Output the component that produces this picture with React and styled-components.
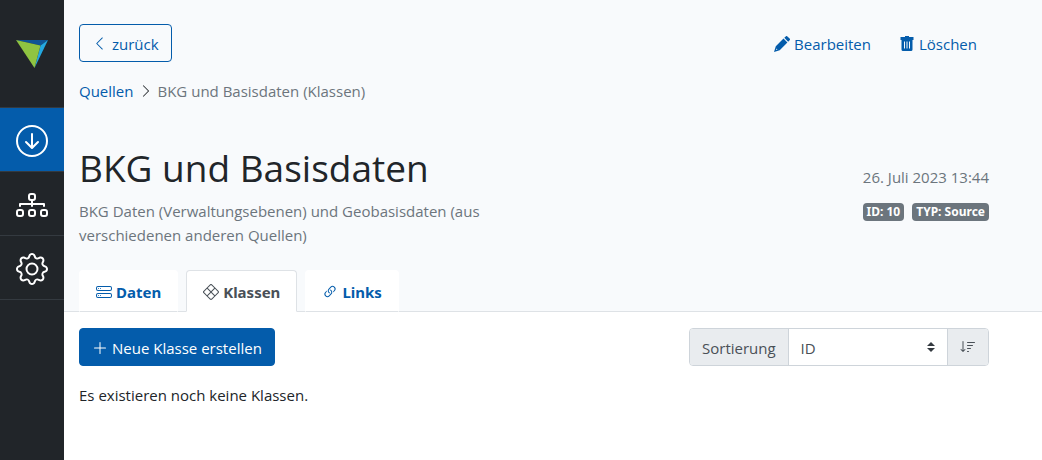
import React, { useState } from 'react';
import styled, { createGlobalStyle, css } from 'styled-components';
import {
  BsArrowDownCircle,
  BsDiagram3,
  BsGear,
  BsChevronLeft,
  BsChevronRight,
  BsHddStack,
  BsXDiamond,
  BsLink45Deg,
  BsPlusLg,
  BsSortDown,
} from 'react-icons/bs';

const blue = '#045cab';
const dark = '#212529';
const muted = '#6c757d';
const line = '#dee2e6';
const inputLine = '#ced4da';

const GlobalStyle = createGlobalStyle`
  *, *::before, *::after {
    box-sizing: border-box;
  }

  body {
    margin: 0;
    background: #fff;
    color: ${dark};
    font-family: 'Open Sans', 'Noto Sans', sans-serif;
    font-size: 15px;
    line-height: 24px;
  }

  button, select {
    font: inherit;
  }

  a {
    color: ${blue};
    text-decoration: none;
  }
`;

const Layout = styled.div`
  display: flex;
  min-height: 100vh;
`;

const Sidebar = styled.nav`
  flex: none;
  width: 64px;
  background: ${dark};
`;

const Logo = styled.a`
  display: flex;
  align-items: center;
  justify-content: center;
  height: 107px;
`;

const SideLink = styled.a`
  display: flex;
  align-items: center;
  justify-content: center;
  height: 64px;
  padding-top: 2px;
  border-top: 1px solid #343a40;
  color: #fff;
  font-size: 32px;
  background: ${(props) => (props.$active ? blue : 'transparent')};

  &:last-child {
    height: 65px;
    border-bottom: 1px solid #343a40;
  }
`;

const Main = styled.main`
  flex: 1;
  min-width: 0;
`;

const Header = styled.header`
  padding-top: 24px;
  background: #f8fafc;
  border-bottom: 1px solid ${line};
`;

const Container = styled.div`
  max-width: 940px;
  padding: 0 15px;
`;

const Row = styled.div`
  display: flex;
  justify-content: space-between;
  align-items: flex-start;
`;

const Button = styled.button`
  display: inline-flex;
  align-items: center;
  gap: 4px;
  height: 38px;
  padding: 1px 12px 0;
  border: 1px solid transparent;
  border-radius: 4px;
  background: transparent;
  color: ${blue};
  cursor: pointer;

  ${(props) => props.$variant === 'outline' && css`
    gap: 5px;
    border-color: ${blue};
  `}

  ${(props) => props.$variant === 'primary' && css`
    border-color: ${blue};
    background: ${blue};
    color: #fff;
  `}
`;

const Actions = styled.div`
  display: flex;
  gap: 3px;

  ${Button} {
    padding-right: 11px;
  }
`;

const Breadcrumb = styled.nav`
  display: flex;
  align-items: center;
  gap: 5px;
  margin-top: 17px;
  color: ${muted};

  svg {
    color: ${dark};
    font-size: 14px;
  }
`;

const TitleRow = styled(Row)`
  margin-top: 41px;
`;

const Title = styled.h1`
  margin: 0 0 7px;
  font-size: 37px;
  font-weight: 400;
  line-height: 48px;
`;

const Lead = styled.p`
  max-width: 425px;
  margin: 0;
  color: ${muted};
`;

const Meta = styled.div`
  display: flex;
  flex-direction: column;
  align-items: flex-end;
  gap: 14px;
  padding-top: 21px;
  color: ${muted};
`;

const Badges = styled.div`
  display: flex;
  gap: 8px;
`;

const Badge = styled.span`
  padding: 0 4px;
  border-radius: 4px;
  background: ${muted};
  color: #fff;
  font-family: 'Noto Sans', sans-serif;
  font-size: 12px;
  font-weight: 700;
  line-height: 18px;
`;

const Tabs = styled.div`
  display: flex;
  gap: 8px;
  margin: 23px 0 -1px;
`;

const Tab = styled.a`
  display: flex;
  align-items: center;
  gap: 4px;
  height: 42px;
  padding: 2px 16px 0;
  border: 1px solid #fff;
  border-bottom-color: ${line};
  border-radius: 4px 4px 0 0;
  background: #fff;
  font-family: 'Noto Sans', sans-serif;
  font-weight: 700;

  ${(props) => props.$active && css`
    border-color: ${line};
    border-bottom-color: #fff;
    color: #495057;
  `}

  svg {
    font-size: 16px;
  }
`;

const Content = styled(Container)`
  padding-top: 16px;
`;

const Empty = styled.p`
  margin: 17px 0 0;
`;

const SortGroup = styled.div`
  display: flex;
  width: 300px;
  height: 38px;
  border: 1px solid ${inputLine};
  border-radius: 4px;
  overflow: hidden;
`;

const SortLabel = styled.label`
  display: flex;
  align-items: center;
  padding: 2px 12px 0;
  background: #e9ecef;
  color: #495057;
`;

const SelectBox = styled.div`
  display: flex;
  flex: 1;
  align-items: center;
  padding-right: 12px;
  border: solid ${inputLine};
  border-width: 0 1px;
`;

const Select = styled.select`
  flex: 1;
  height: 36px;
  margin-right: -8px;
  padding: 2px 12px 0;
  border: 0;
  background: transparent;
  color: #495057;
  appearance: none;
`;

const SortButton = styled.button`
  display: flex;
  align-items: center;
  padding: 0 12px;
  border: 0;
  background: #e9ecef;
  color: #495057;
  font-size: 16px;
`;

const LogoMark = () => (
  <svg width="32" height="30" viewBox="0 0 32 30" aria-hidden="true">
    <path d="M0 1H32L24.500 6.500Z" fill="#0f5595" />
    <path d="M32 1L18.500 29L24.500 6.500Z" fill="#23a9e1" />
    <path d="M0 1L24.500 6.500L18.500 29Z" fill="#8fc441" />
  </svg>
);

const PencilIcon = () => (
  <svg width="16" height="16" viewBox="0 0 16 16" fill="currentColor" aria-hidden="true">
    <path d="M11.700.4a1.200 1.200 0 0 1 1.700 0l2.200 2.200a1.200 1.200 0 0 1 0 1.700l-1.400 1.400L10.300 1.800z" />
    <path d="M9.500 2.600l3.900 3.900-7.700 7.700L0 16l1.800-5.700zM2.500 12.600l-.5 1.500 1.500-.5z" fillRule="evenodd" />
  </svg>
);

const TrashIcon = () => (
  <svg width="16" height="16" viewBox="0 0 16 16" fill="currentColor" aria-hidden="true">
    <path d="M6 0h4v1h4.500v3h-13V1H6z" />
    <path d="M2.500 4h11v9.500a1.500 1.500 0 0 1-1.500 1.500H4a1.500 1.500 0 0 1-1.500-1.500zM5 5.500v7h1v-7zm2.500 0v7h1v-7zm2.500 0v7h1v-7z" fillRule="evenodd" />
  </svg>
);

const Arrows = () => (
  <svg width="8" height="10" viewBox="0 0 4 5" aria-hidden="true">
    <path fill="#343a40" d="M2 0L0 2h4zm0 5L0 3h4z" />
  </svg>
);

const tabs = [
  { id: 'daten', label: 'Daten', icon: BsHddStack },
  { id: 'klassen', label: 'Klassen', icon: BsXDiamond },
  { id: 'links', label: 'Links', icon: BsLink45Deg },
];

const App = () => {
  const [tab, setTab] = useState('klassen');

  return (
    <>
      <GlobalStyle />
      <Layout>
        <Sidebar>
          <Logo href="#" aria-label="Start"><LogoMark /></Logo>
          <SideLink href="#quellen" $active aria-label="Quellen"><BsArrowDownCircle /></SideLink>
          <SideLink href="#struktur" aria-label="Struktur"><BsDiagram3 /></SideLink>
          <SideLink href="#einstellungen" aria-label="Einstellungen"><BsGear /></SideLink>
        </Sidebar>
        <Main>
          <Header>
            <Container>
              <Row>
                <Button $variant="outline"><BsChevronLeft />zurück</Button>
                <Actions>
                  <Button><PencilIcon />Bearbeiten</Button>
                  <Button><TrashIcon />Löschen</Button>
                </Actions>
              </Row>
              <Breadcrumb>
                <a href="#quellen">Quellen</a>
                <BsChevronRight />
                <span>BKG und Basisdaten (Klassen)</span>
              </Breadcrumb>
              <TitleRow>
                <div>
                  <Title>BKG und Basisdaten</Title>
                  <Lead>
                    BKG Daten (Verwaltungsebenen) und Geobasisdaten (aus verschiedenen anderen Quellen)
                  </Lead>
                </div>
                <Meta>
                  <time>26. Juli 2023 13:44</time>
                  <Badges>
                    <Badge>ID: 10</Badge>
                    <Badge>TYP: Source</Badge>
                  </Badges>
                </Meta>
              </TitleRow>
              <Tabs>
                {tabs.map(({ id, label, icon: Icon }) => (
                  <Tab key={id} href={`#${id}`} $active={tab === id} onClick={() => setTab(id)}>
                    <Icon />
                    {label}
                  </Tab>
                ))}
              </Tabs>
            </Container>
          </Header>
          <Content>
            <Row>
              <Button $variant="primary"><BsPlusLg size={16} />Neue Klasse erstellen</Button>
              <SortGroup>
                <SortLabel htmlFor="sort">Sortierung</SortLabel>
                <SelectBox>
                  <Select id="sort" defaultValue="id">
                    <option value="id">ID</option>
                    <option value="name">Name</option>
                  </Select>
                  <Arrows />
                </SelectBox>
                <SortButton aria-label="Absteigend sortieren"><BsSortDown /></SortButton>
              </SortGroup>
            </Row>
            <Empty>Es existieren noch keine Klassen.</Empty>
          </Content>
        </Main>
      </Layout>
    </>
  );
};

export default App;
